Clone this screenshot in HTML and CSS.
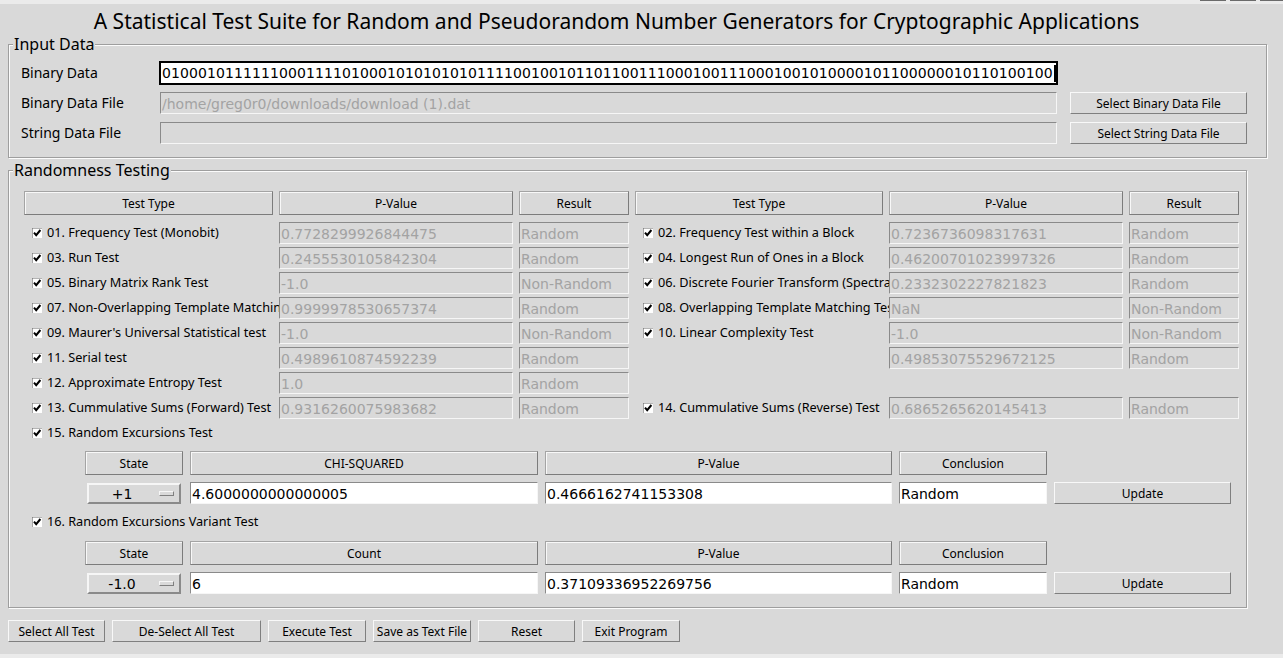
FILE: index.html
```html
<!DOCTYPE html>
<html lang="en">
<head>
<meta charset="utf-8">
<title>NIST Randomness Test Suite</title>
<link rel="stylesheet" href="styles.css">
</head>
<body>
<div class="app">
  <div class="chrome-top"><span class="wbtn"></span><span class="wbtn"></span><span class="wbtn last"></span></div>
  <h1 class="title">A Statistical Test Suite for Random and Pseudorandom Number Generators for Cryptographic Applications</h1>

  <fieldset class="frame input-frame">
    <legend>Input Data</legend>
    <div class="input-grid">
      <div class="in-label">Binary Data</div>
      <div class="entry focus">010001011111100011110100010101010101111001001011011001110001001110001001010000101100000010110100100<span class="caret"></span></div>
      <div></div>
      <div class="in-label">Binary Data File</div>
      <div class="entry disabled">/home/greg0r0/downloads/download (1).dat</div>
      <button class="btn">Select Binary Data File</button>
      <div class="in-label">String Data File</div>
      <div class="entry disabled"></div>
      <button class="btn">Select String Data File</button>
    </div>
  </fieldset>

  <fieldset class="frame test-frame">
    <legend>Randomness Testing</legend>
    <div class="tests-grid">
      <div class="hdr">Test Type</div>
      <div class="hdr">P-Value</div>
      <div class="hdr">Result</div>
      <div class="hdr">Test Type</div>
      <div class="hdr">P-Value</div>
      <div class="hdr">Result</div>

      <div class="chk"><svg class="box" viewBox="0 0 10 10"><rect x="0" y="0" width="10" height="10" fill="#fff"/><path d="M0 10V0h10" fill="none" stroke="#6b6b6b" stroke-width="1.2"/><path d="M2 4.6l2.2 2.6L8.4 2" fill="none" stroke="#000" stroke-width="2"/></svg><span>01. Frequency Test (Monobit)</span></div>
      <div class="entry disabled">0.7728299926844475</div>
      <div class="entry disabled">Random</div>
      <div class="chk"><svg class="box" viewBox="0 0 10 10"><rect x="0" y="0" width="10" height="10" fill="#fff"/><path d="M0 10V0h10" fill="none" stroke="#6b6b6b" stroke-width="1.2"/><path d="M2 4.6l2.2 2.6L8.4 2" fill="none" stroke="#000" stroke-width="2"/></svg><span>02. Frequency Test within a Block</span></div>
      <div class="entry disabled">0.7236736098317631</div>
      <div class="entry disabled">Random</div>

      <div class="chk"><svg class="box" viewBox="0 0 10 10"><rect x="0" y="0" width="10" height="10" fill="#fff"/><path d="M0 10V0h10" fill="none" stroke="#6b6b6b" stroke-width="1.2"/><path d="M2 4.6l2.2 2.6L8.4 2" fill="none" stroke="#000" stroke-width="2"/></svg><span>03. Run Test</span></div>
      <div class="entry disabled">0.2455530105842304</div>
      <div class="entry disabled">Random</div>
      <div class="chk"><svg class="box" viewBox="0 0 10 10"><rect x="0" y="0" width="10" height="10" fill="#fff"/><path d="M0 10V0h10" fill="none" stroke="#6b6b6b" stroke-width="1.2"/><path d="M2 4.6l2.2 2.6L8.4 2" fill="none" stroke="#000" stroke-width="2"/></svg><span>04. Longest Run of Ones in a Block</span></div>
      <div class="entry disabled">0.46200701023997326</div>
      <div class="entry disabled">Random</div>

      <div class="chk"><svg class="box" viewBox="0 0 10 10"><rect x="0" y="0" width="10" height="10" fill="#fff"/><path d="M0 10V0h10" fill="none" stroke="#6b6b6b" stroke-width="1.2"/><path d="M2 4.6l2.2 2.6L8.4 2" fill="none" stroke="#000" stroke-width="2"/></svg><span>05. Binary Matrix Rank Test</span></div>
      <div class="entry disabled">-1.0</div>
      <div class="entry disabled">Non-Random</div>
      <div class="chk"><svg class="box" viewBox="0 0 10 10"><rect x="0" y="0" width="10" height="10" fill="#fff"/><path d="M0 10V0h10" fill="none" stroke="#6b6b6b" stroke-width="1.2"/><path d="M2 4.6l2.2 2.6L8.4 2" fill="none" stroke="#000" stroke-width="2"/></svg><span>06. Discrete Fourier Transform (Spectral Test)</span></div>
      <div class="entry disabled">0.2332302227821823</div>
      <div class="entry disabled">Random</div>

      <div class="chk"><svg class="box" viewBox="0 0 10 10"><rect x="0" y="0" width="10" height="10" fill="#fff"/><path d="M0 10V0h10" fill="none" stroke="#6b6b6b" stroke-width="1.2"/><path d="M2 4.6l2.2 2.6L8.4 2" fill="none" stroke="#000" stroke-width="2"/></svg><span>07. Non-Overlapping Template Matching Test</span></div>
      <div class="entry disabled">0.9999978530657374</div>
      <div class="entry disabled">Random</div>
      <div class="chk"><svg class="box" viewBox="0 0 10 10"><rect x="0" y="0" width="10" height="10" fill="#fff"/><path d="M0 10V0h10" fill="none" stroke="#6b6b6b" stroke-width="1.2"/><path d="M2 4.6l2.2 2.6L8.4 2" fill="none" stroke="#000" stroke-width="2"/></svg><span>08. Overlapping Template Matching Test</span></div>
      <div class="entry disabled">NaN</div>
      <div class="entry disabled">Non-Random</div>

      <div class="chk"><svg class="box" viewBox="0 0 10 10"><rect x="0" y="0" width="10" height="10" fill="#fff"/><path d="M0 10V0h10" fill="none" stroke="#6b6b6b" stroke-width="1.2"/><path d="M2 4.6l2.2 2.6L8.4 2" fill="none" stroke="#000" stroke-width="2"/></svg><span>09. Maurer's Universal Statistical test</span></div>
      <div class="entry disabled">-1.0</div>
      <div class="entry disabled">Non-Random</div>
      <div class="chk"><svg class="box" viewBox="0 0 10 10"><rect x="0" y="0" width="10" height="10" fill="#fff"/><path d="M0 10V0h10" fill="none" stroke="#6b6b6b" stroke-width="1.2"/><path d="M2 4.6l2.2 2.6L8.4 2" fill="none" stroke="#000" stroke-width="2"/></svg><span>10. Linear Complexity Test</span></div>
      <div class="entry disabled">-1.0</div>
      <div class="entry disabled">Non-Random</div>

      <div class="chk"><svg class="box" viewBox="0 0 10 10"><rect x="0" y="0" width="10" height="10" fill="#fff"/><path d="M0 10V0h10" fill="none" stroke="#6b6b6b" stroke-width="1.2"/><path d="M2 4.6l2.2 2.6L8.4 2" fill="none" stroke="#000" stroke-width="2"/></svg><span>11. Serial test</span></div>
      <div class="entry disabled">0.4989610874592239</div>
      <div class="entry disabled">Random</div>
      <div></div>
      <div class="entry disabled">0.49853075529672125</div>
      <div class="entry disabled">Random</div>

      <div class="chk"><svg class="box" viewBox="0 0 10 10"><rect x="0" y="0" width="10" height="10" fill="#fff"/><path d="M0 10V0h10" fill="none" stroke="#6b6b6b" stroke-width="1.2"/><path d="M2 4.6l2.2 2.6L8.4 2" fill="none" stroke="#000" stroke-width="2"/></svg><span>12. Approximate Entropy Test</span></div>
      <div class="entry disabled">1.0</div>
      <div class="entry disabled">Random</div>
      <div></div><div></div><div></div>

      <div class="chk"><svg class="box" viewBox="0 0 10 10"><rect x="0" y="0" width="10" height="10" fill="#fff"/><path d="M0 10V0h10" fill="none" stroke="#6b6b6b" stroke-width="1.2"/><path d="M2 4.6l2.2 2.6L8.4 2" fill="none" stroke="#000" stroke-width="2"/></svg><span>13. Cummulative Sums (Forward) Test</span></div>
      <div class="entry disabled">0.9316260075983682</div>
      <div class="entry disabled">Random</div>
      <div class="chk"><svg class="box" viewBox="0 0 10 10"><rect x="0" y="0" width="10" height="10" fill="#fff"/><path d="M0 10V0h10" fill="none" stroke="#6b6b6b" stroke-width="1.2"/><path d="M2 4.6l2.2 2.6L8.4 2" fill="none" stroke="#000" stroke-width="2"/></svg><span>14. Cummulative Sums (Reverse) Test</span></div>
      <div class="entry disabled">0.6865265620145413</div>
      <div class="entry disabled">Random</div>

      <div class="chk span-all"><svg class="box" viewBox="0 0 10 10"><rect x="0" y="0" width="10" height="10" fill="#fff"/><path d="M0 10V0h10" fill="none" stroke="#6b6b6b" stroke-width="1.2"/><path d="M2 4.6l2.2 2.6L8.4 2" fill="none" stroke="#000" stroke-width="2"/></svg><span>15. Random Excursions Test</span></div>
    </div>

    <div class="sub-grid">
      <div class="hdr">State</div>
      <div class="hdr">CHI-SQUARED</div>
      <div class="hdr">P-Value</div>
      <div class="hdr">Conclusion</div>
      <div></div>
      <div class="opt"><span class="val">+1</span><span class="ind"></span></div>
      <div class="entry white">4.6000000000000005</div>
      <div class="entry white">0.4666162741153308</div>
      <div class="entry white">Random</div>
      <button class="btn">Update</button>
    </div>

    <div class="chk solo"><svg class="box" viewBox="0 0 10 10"><rect x="0" y="0" width="10" height="10" fill="#fff"/><path d="M0 10V0h10" fill="none" stroke="#6b6b6b" stroke-width="1.2"/><path d="M2 4.6l2.2 2.6L8.4 2" fill="none" stroke="#000" stroke-width="2"/></svg><span>16. Random Excursions Variant Test</span></div>

    <div class="sub-grid second">
      <div class="hdr">State</div>
      <div class="hdr">Count</div>
      <div class="hdr">P-Value</div>
      <div class="hdr">Conclusion</div>
      <div></div>
      <div class="opt"><span class="val">-1.0</span><span class="ind"></span></div>
      <div class="entry white">6</div>
      <div class="entry white">0.37109336952269756</div>
      <div class="entry white">Random</div>
      <button class="btn">Update</button>
    </div>
  </fieldset>

  <div class="actions">
    <button class="btn b1">Select All Test</button>
    <button class="btn b2">De-Select All Test</button>
    <button class="btn b3">Execute Test</button>
    <button class="btn b4">Save as Text File</button>
    <button class="btn b5">Reset</button>
    <button class="btn b6">Exit Program</button>
  </div>
  <div class="chrome-bottom"></div>
</div>
</body>
</html>
```

FILE: styles.css
```css
* { box-sizing: border-box; }
html, body { margin: 0; padding: 0; }
body {
  background: #d9d9d9;
  font-family: "Noto Sans", "DejaVu Sans", sans-serif;
  color: #000;
}
.app {
  width: 1283px;
  height: 658px;
  display: flex;
  flex-direction: column;
  overflow: hidden;
}
.chrome-top {
  flex: none;
  height: 4px;
  background: #ebebeb;
  display: flex;
  justify-content: flex-end;
  gap: 4px;
}
.wbtn { width: 26px; height: 1px; background: #6a6a6a; }
.wbtn.last { width: 23px; }
.title {
  margin: 0;
  width: 1233px;
  height: 31px;
  line-height: 34px;
  text-align: center;
  font-size: 21px;
  font-weight: 400;
  white-space: nowrap;
  flex: none;
}

/* label frames */
fieldset.frame {
  margin: 0;
  min-width: 0;
  border: 1px solid #9e9e9e;
  box-shadow: inset 1px 1px 0 #fbfbfb, 1px 1px 0 #fbfbfb;
  padding: 0 0 0 4px;
  flex: none;
}
.frame legend {
  font-size: 16px;
  line-height: 18px;
  padding: 0 1px;
  background: #d9d9d9;
}
.input-frame {
  margin: 0 16px 0 8px !important;
  padding-top: 9px !important;
  padding-bottom: 13px !important;
}
.input-grid {
  margin-left: 8px;
  display: grid;
  grid-template-columns: 126px 897px 177px;
  column-gap: 13px;
  row-gap: 8px;
  grid-auto-rows: 22px;
}
.in-label {
  font-size: 14px;
  display: flex;
  align-items: center;
  white-space: nowrap;
  padding-bottom: 2px;
}

/* entries */
.entry {
  height: 22px;
  border: 1px solid;
  border-color: #8a8a8a #f6f6f6 #f6f6f6 #8a8a8a;
  font-family: "DejaVu Sans", sans-serif;
  font-size: 14px;
  line-height: 20px;
  padding: 1px 1px 0;
  white-space: nowrap;
  overflow: hidden;
}
.entry.disabled { color: #a3a3a3; background: #d9d9d9; }
.entry.white { background: #fff; color: #000; }
.entry.focus {
  background: #fff;
  color: #000;
  border-color: #000;
  outline: 1px solid #000;
  padding-top: 0;
  letter-spacing: 0.09px;
}
.caret {
  display: inline-block;
  width: 2px;
  height: 17px;
  background: #000;
  vertical-align: -4px;
  margin-left: 1px;
}

/* buttons and headers */
.btn {
  margin: 0;
  padding: 0;
  height: 22px;
  background: #d9d9d9;
  border: 1px solid;
  border-color: #f8f8f8 #7f7f7f #7f7f7f #f8f8f8;
  font-family: "Noto Sans", sans-serif;
  font-size: 12px;
  color: #000;
  display: flex;
  align-items: center;
  justify-content: center;
  white-space: nowrap;
}
.hdr {
  height: 24px;
  align-self: start;
  border: 1px solid;
  border-color: #a4a4a4 #7c7c7c #7c7c7c #a4a4a4;
  box-shadow: inset 1px 1px 0 #f8f8f8;
  font-size: 12px;
  display: flex;
  align-items: center;
  justify-content: center;
  white-space: nowrap;
}

/* randomness testing */
.test-frame {
  margin: 3px 36px 0 8px !important;
  padding-top: 12px !important;
  padding-bottom: 13px !important;
}
.tests-grid {
  margin-left: 11px;
  display: grid;
  grid-template-columns: 249px 234px 110px 248px 234px 110px;
  column-gap: 6px;
  row-gap: 3px;
  grid-template-rows: 28px;
  grid-auto-rows: 22px;
}
.chk {
  display: flex;
  align-items: flex-start;
  gap: 5px;
  width: calc(100% + 6px);
  height: 22px;
  overflow: hidden;
  white-space: nowrap;
  font-size: 12.7px;
  line-height: 20px;
  padding-left: 8px;
}
.chk .box { flex: none; width: 10px; height: 10px; margin-top: 6px; }
.chk.span-all { grid-column: 1 / -1; width: auto; }
.chk.solo { margin: 7px 0 0 11px; width: auto; }

.sub-grid {
  margin: 7px 0 0 72px;
  display: grid;
  grid-template-columns: 98px 348px 347px 148px 177px;
  column-gap: 7px;
  grid-template-rows: 31px 22px;
}
.sub-grid.second { margin-top: 8px; }

.opt {
  margin: 1px 0 0 2px;
  width: 94px;
  height: 21px;
  border: 2px solid;
  border-color: #f6f6f6 #8a8a8a #8a8a8a #f6f6f6;
  display: flex;
  align-items: center;
  font-family: "DejaVu Sans", sans-serif;
  font-size: 14px;
}
.opt .val { flex: 1; text-align: center; padding-right: 4px; }
.opt .ind {
  flex: none;
  width: 15px;
  height: 5px;
  border: 1px solid;
  border-color: #f6f6f6 #7f7f7f #7f7f7f #f6f6f6;
  margin-right: 5px;
}

/* bottom */
.actions {
  flex: none;
  display: flex;
  gap: 7px;
  margin: 12px 0 0 8px;
}
.b1 { width: 97px; }
.b2 { width: 149px; }
.b3 { width: 98px; }
.b4 { width: 98px; }
.b5 { width: 97px; }
.b6 { width: 98px; }
.chrome-bottom {
  margin-top: auto;
  height: 4px;
  background: #ebebeb;
  flex: none;
}
```
